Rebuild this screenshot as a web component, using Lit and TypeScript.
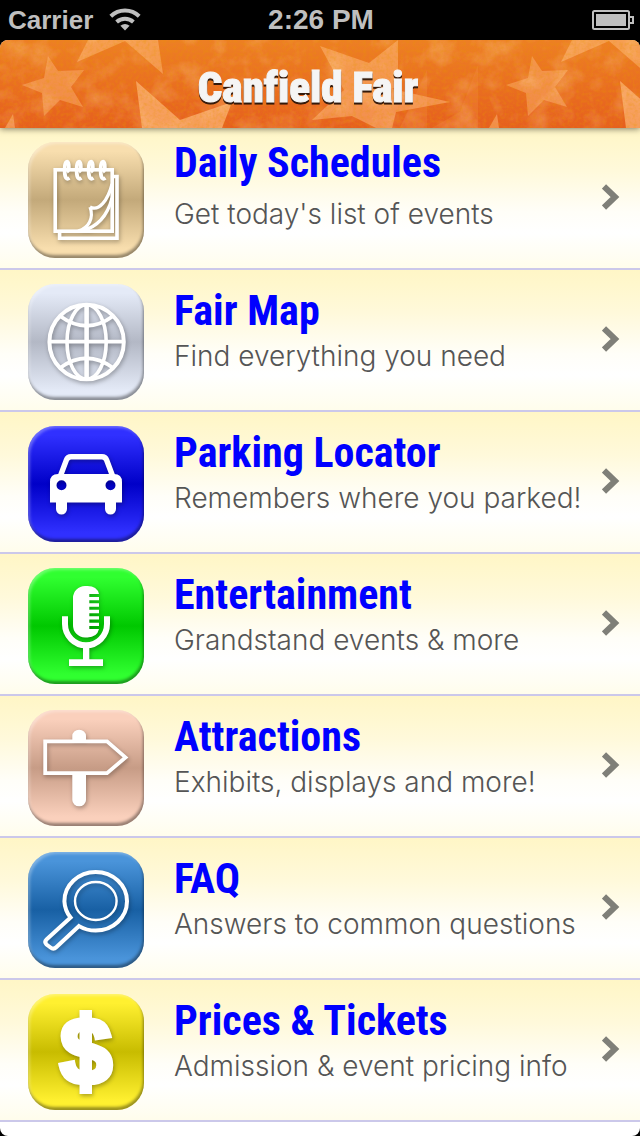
import { LitElement, html, svg, css } from "lit";
import type { SVGTemplateResult } from "lit";
import { customElement, property } from "lit/decorators.js";

interface MenuItem {
  title: string;
  detail: string;
  tone: string;
  icon: SVGTemplateResult;
}

const notepad = svg`
  <g fill="none" stroke="#fff" stroke-width="3.6">
    <path d="M84 34.5H89V96.3H31.6V89" />
    <rect x="27.2" y="27.8" width="57" height="61.4" />
    <path d="M62 65C71 70 80 58 84 42M62 65C66 76 61 86 50 89M84 56C80 72 70 85 53 89.4" stroke-width="3.2" />
    ${[38.5, 50.5, 62.5, 74.5].map(
      (x) => svg`<path transform="translate(${x} 0)" stroke-width="3.8"
        d="M3 36C-1.6 39 -2 32 -1.8 26C-1.6 18.6 1.6 18 2.2 22.5C2.6 26 2 29 .4 29.6" />`
    )}
  </g>`;

const globe = svg`
  <g fill="none" stroke="#fff" stroke-width="4">
    <circle cx="58.6" cy="58" r="37.2" />
    <ellipse cx="58.6" cy="58" rx="19.6" ry="37.2" stroke-width="3.6" />
    <path d="M58.6 21V95" stroke-width="4.6" />
    <path d="M21 57.6H96" stroke-width="3.6" />
    <path d="M32 32Q58.6 51.5 85.2 32M32 84Q58.6 64.5 85.2 84" stroke-width="3.8" />
  </g>`;

const car = svg`
  <path fill="none" stroke="#fff" stroke-width="5.4" d="M32 51L38.4 34Q39.6 30.7 43 30.7H74Q77.4 30.7 78.6 34L85 51" />
  <path fill="#fff" fill-rule="evenodd" d="M22 76.5V56Q22 48 30 48H86Q94 48 94 56V76.5H88V83A5.5 5.5 0 0 1 77 83V76.5H39V83A5.5 5.5 0 0 1 28 83V76.5ZM33.5 54.3A5 5 0 1 0 33.5 64.3A5 5 0 1 0 33.5 54.3ZM82.5 54.3A5 5 0 1 0 82.5 64.3A5 5 0 1 0 82.5 54.3Z" />`;

const microphone = svg`
  <path fill="#fff" d="M45 30A12 12 0 0 1 57 18H59.5Q69 18 71 26H61.3V29H71V32.3H61.3V35.3H71V38.7H61.3V41.8H71V45.2H61.3V48.2H71V51.6H61.3V54.7H71V58H61.3V61H71Q69 69.4 59.5 69.4H57A12 12 0 0 1 45 57Z" />
  <path fill="none" stroke="#fff" stroke-width="6" d="M37 48.3V56A21 21.3 0 0 0 79 56V48.3" />
  <path fill="#fff" d="M55 79H61.3V91.3H75V98H41V91.3H55Z" />`;

const signpost = svg`
  <path fill="#fff" d="M44.3 31V26A6.8 6.3 0 0 1 58 26V31ZM44.3 63V90A6.8 6.3 0 0 0 58 90V63Z" />
  <path fill="none" stroke="#fff" stroke-width="3.8" d="M17.2 31.4H79L97.5 47.4L79 63.2H17.2Z" />`;

const magnifier = svg`
  <path fill="none" stroke="#fff" stroke-width="4" d="M42.6 65.6L18.500 87.5Q16 90 18.5 92.5L22.5 95.500Q25.500 98 28.5 95L51 74.1A31.3 29.3 0 0 0 67.7 78.6A31.3 29.3 0 0 0 99 49.3A31.3 29.3 0 0 0 67.7 20A31.3 29.3 0 0 0 36.4 49.3A31.3 29.3 0 0 0 42.6 65.6Z" />
  <ellipse cx="67.8" cy="49" rx="20.8" ry="19" fill="none" stroke="#fff" stroke-width="2.4" />`;

const dollar = svg`
  <text class="money" x="58" y="90" text-anchor="middle">$</text>
  <rect x="51.5" y="16" width="12.5" height="84" fill="#fff" />`;

const items: MenuItem[] = [
  { title: "Daily Schedules", detail: "Get today's list of events", tone: "sand", icon: notepad },
  { title: "Fair Map", detail: "Find everything you need", tone: "silver", icon: globe },
  { title: "Parking Locator", detail: "Remembers where you parked!", tone: "blue", icon: car },
  { title: "Entertainment", detail: "Grandstand events & more", tone: "green", icon: microphone },
  { title: "Attractions", detail: "Exhibits, displays and more!", tone: "clay", icon: signpost },
  { title: "FAQ", detail: "Answers to common questions", tone: "azure", icon: magnifier },
  { title: "Prices & Tickets", detail: "Admission & event pricing info", tone: "gold", icon: dollar },
];

@customElement("status-bar")
export class StatusBar extends LitElement {
  static styles = css`
    :host {
      display: grid;
      grid-template-columns: 1fr auto 1fr;
      align-items: center;
      height: 40px;
      padding: 0 6px 0 8px;
      background: #000;
      color: #bfbfbf;
      font: 700 26px/40px "Liberation Sans", Arial, sans-serif;
    }
    .carrier {
      display: flex;
      align-items: center;
      gap: 16px;
    }
    .time {
      font-size: 28px;
    }
    .battery {
      justify-self: end;
    }
    svg {
      display: block;
    }
  `;

  render() {
    return html`
      <div class="carrier">
        <span>Carrier</span>
        <svg width="32" height="24" viewBox="0 0 32 24" aria-label="Wi-Fi">
          <g fill="none" stroke="#bfbfbf" stroke-width="4">
            <path d="M1.8 8.2A20.5 20.5 0 0 1 30.2 8.2" />
            <path d="M7.6 14A12.5 12.5 0 0 1 24.4 14" />
          </g>
          <path fill="#bfbfbf" d="M16 22.5L11.4 17.8Q16 14 20.6 17.8Z" />
        </svg>
      </div>
      <span class="time">2:26 PM</span>
      <svg class="battery" width="42" height="20" viewBox="0 0 42 20" aria-label="Battery full">
        <rect x="1" y="1" width="36" height="18" rx="1.5" fill="none" stroke="#bfbfbf" stroke-width="2" />
        <rect x="4" y="4" width="30" height="12" fill="#bfbfbf" />
        <path d="M38 7H41V13H38" fill="none" stroke="#bfbfbf" stroke-width="2" />
      </svg>
    `;
  }
}

@customElement("title-bar")
export class TitleBar extends LitElement {
  @property() heading = "";

  static styles = css`
    :host {
      display: flex;
      align-items: center;
      justify-content: center;
      position: relative;
      z-index: 1;
      height: 88px;
      padding: 6px 24px 0 0;
      box-sizing: border-box;
      border-radius: 8px 8px 0 0;
      box-shadow: 0 1px 6px rgba(0, 0, 0, 0.5);
      background: linear-gradient(#ed7f24, #e65f1e);
    }
    .backdrop {
      position: absolute;
      inset: 0;
      width: 100%;
      height: 100%;
      border-radius: inherit;
    }
    h1 {
      position: relative;
      margin: 0;
      color: #f5f5f5;
      font: 900 43px/48px "Roboto Condensed", "Liberation Sans Narrow", "Liberation Sans", sans-serif;
      font-variant-ligatures: none;
      -webkit-text-stroke: 1px #f5f5f5;
      filter: drop-shadow(0 2px 0 #33190a);
    }
  `;

  render() {
    return html`
      <svg class="backdrop" aria-hidden="true">
        <defs>
          <filter id="grain" x="0" y="0" width="100%" height="100%">
            <feTurbulence type="fractalNoise" baseFrequency="0.04" numOctaves="5" seed="8" />
            <feColorMatrix values="0 0 0 0 1  0 0 0 0 .72  0 0 0 0 .35  .7 0 0 0 -.32" />
          </filter>
          <filter id="speckle" x="0" y="0" width="100%" height="100%">
            <feTurbulence type="fractalNoise" baseFrequency="0.3" numOctaves="2" seed="3" />
            <feColorMatrix values="0 0 0 0 .8  0 0 0 0 .3  0 0 0 0 0  0 .7 0 0 -.28" />
          </filter>
          <pattern id="stars" width="484" height="88" patternUnits="userSpaceOnUse">
            <g fill="#ffbe80">
              <path opacity=".42" d="M48 16L58 31L84 30L71 47L83 67L60 60L44 76L42 53L22 45L44 38Z" />
              <path opacity=".5" d="M77 22L88 0H158L163 34L125 1Z" />
              <path opacity=".65" d="M136 41L180 80L232 62L222 88H142Z" />
              <path opacity=".5" d="M320 6L369 23L398 0V45L392 49L450 62L396 72L392 88H376L352 76L312 80L344 50Z" />
              <path opacity=".12" d="M478 25V88H432L460 72Z" />
              <path opacity=".12" d="M427 30V88H400Z" />
              <path opacity=".5" d="M5 88L13 74L15 88Z" />
            </g>
          </pattern>
        </defs>
        <rect width="100%" height="100%" fill="url(#stars)" />
        <rect width="100%" height="100%" filter="url(#grain)" />
        <rect width="100%" height="100%" filter="url(#speckle)" />
      </svg>
      <h1>${this.heading}</h1>
    `;
  }
}

@customElement("app-root")
export class AppRoot extends LitElement {
  static styles = css`
    :host {
      display: flex;
      flex-direction: column;
      min-height: 100vh;
      background: #000;
    }
    .screen {
      flex: 1;
      border-radius: 8px;
      background: #fff;
    }
    .menu {
      list-style: none;
      margin: 0;
      padding: 0;
    }
    .row {
      display: flex;
      align-items: flex-start;
      gap: 30px;
      min-height: 126px;
      padding: 14px 20px 0 28px;
      border-bottom: 2px solid #cbc8ea;
      background: linear-gradient(#fff6c6 0%, #fff9da 30%, #fffef8 60%, #fff 75%, #fffdec 100%);
      text-decoration: none;
    }
    .tile {
      flex: none;
      width: 116px;
      height: 116px;
      border-radius: 27px;
      background: linear-gradient(var(--light) 8%, var(--dark) 50%, var(--light) 92%);
      box-shadow: inset -1px -3px 3px rgba(0, 0, 0, 0.4), inset 2px 2px 3px rgba(255, 255, 255, 0.3);
    }
    .tile svg {
      display: block;
      filter: drop-shadow(1px 2px 2px rgba(0, 0, 0, 0.3));
    }
    .sand { --light: #f8deae; --dark: #c3a97a; }
    .silver { --light: #e4eaf7; --dark: #b3b8c5; }
    .blue { --light: #3030ff; --dark: #0000c8; }
    .green { --light: #30ff30; --dark: #00c800; }
    .clay { --light: #fad0bc; --dark: #c79c86; }
    .azure { --light: #4a94da; --dark: #1860a4; }
    .gold { --light: #fff030; --dark: #c8bc00; }
    .money {
      fill: #fff;
      stroke: #fff;
      stroke-width: 5px;
      font: 700 94px "Liberation Sans", Arial, sans-serif;
    }
    .text {
      flex: 1;
      min-width: 0;
      display: flex;
      flex-direction: column;
      padding-top: 3px;
      white-space: nowrap;
    }
    .title {
      color: #0000ff;
      font: 700 42px/48px "Roboto Condensed", "Liberation Sans Narrow", "Liberation Sans", sans-serif;
    }
    .detail {
      color: #555;
      font: 300 28px/42px Inter, "Open Sans", sans-serif;
    }
    .first .text {
      gap: 6px;
      margin-top: -6px;
    }
    .chevron {
      flex: none;
      align-self: center;
    }
  `;

  render() {
    return html`
      <status-bar></status-bar>
      <main class="screen">
        <title-bar heading="Canfield Fair"></title-bar>
        <ul class="menu">
          ${items.map(
            (item, i) => html`
              <li>
                <a class="row ${i === 0 ? "first" : ""}" href="#">
                  <span class="tile ${item.tone}">
                    <svg width="116" height="116" viewBox="0 0 116 116" aria-hidden="true">${item.icon}</svg>
                  </span>
                  <span class="text">
                    <span class="title">${item.title}</span>
                    <span class="detail">${item.detail}</span>
                  </span>
                  <svg class="chevron" width="18" height="42" viewBox="0 0 18 42" aria-hidden="true">
                    <path d="M2 2.5L13 13L2 23.5" fill="none" stroke="#7f7f78" stroke-width="6" />
                  </svg>
                </a>
              </li>
            `
          )}
        </ul>
      </main>
    `;
  }
}
